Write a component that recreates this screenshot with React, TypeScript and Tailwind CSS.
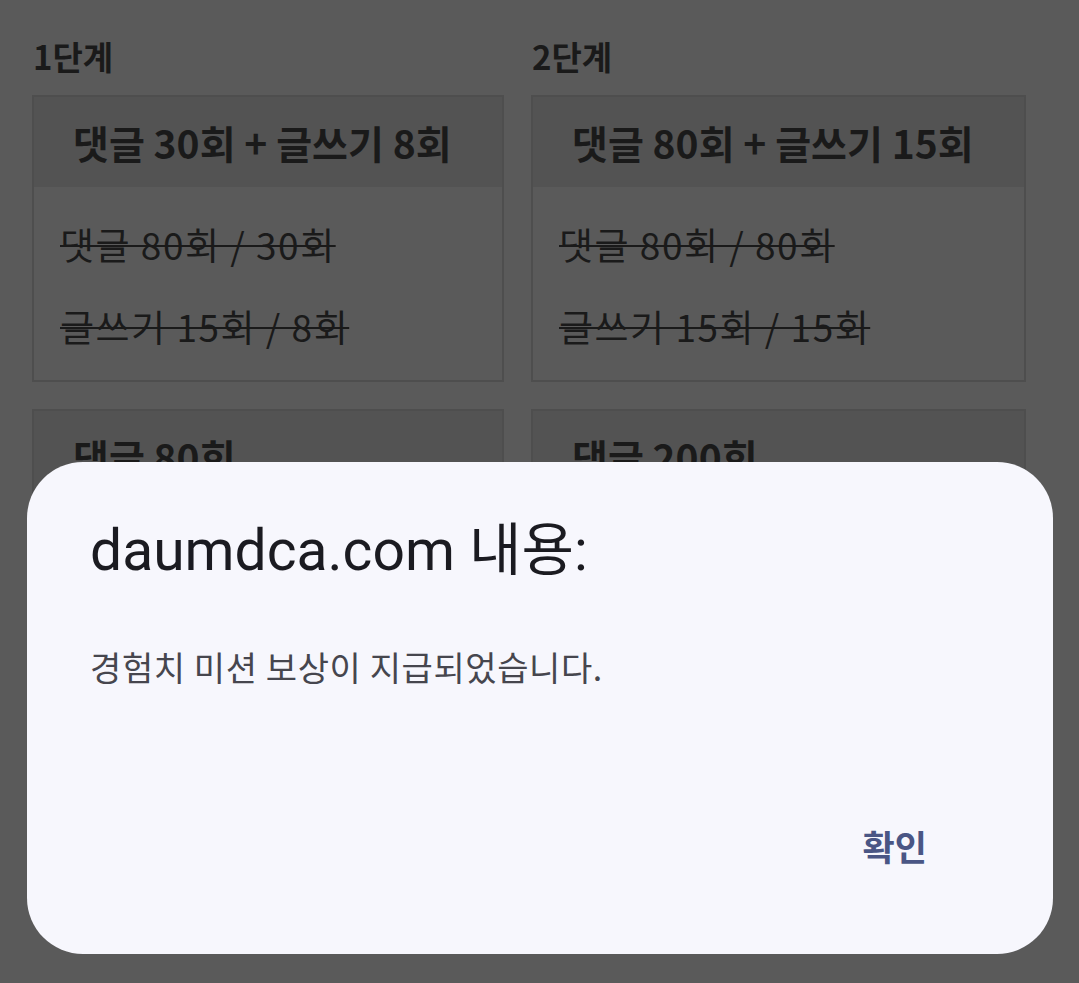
import React from "react";

const KR = "font-['Noto_Sans_CJK_KR','Noto_Sans',sans-serif]";

function Card({ title, lines, last }: { title: string; lines?: string[]; last?: boolean }) {
  return (
    <div className={`border-2 border-[#4e4e4e] ${last ? "" : "mb-[27px]"}`}>
      <div className="h-[90px] bg-[#535353] flex items-center pl-[39px]">
        <span className={`${KR} font-bold text-[39px] leading-none text-[#1a1a1a]`}>{title}</span>
      </div>
      {lines && (
        <div className="pt-[17px] pb-[12px] pl-[26px]">
          {lines.map((l) => (
            <div key={l} className={`${KR} h-[82px] flex items-center text-[37px] text-[#1a1a1a] line-through decoration-2 tracking-[1.5px]`}>
              {l}
            </div>
          ))}
        </div>
      )}
      {!lines && <div className="h-[200px] bg-[#535353]" />}
    </div>
  );
}

export default function App() {
  return (
    <div className="relative w-[1079px] h-[983px] bg-[#5a5a5a] overflow-hidden">
      <div className="flex gap-[27px] pl-[32px] pt-[36px]">
        <div className="w-[472px] flex flex-col">
          <div className={`${KR} font-bold text-[33px] leading-[40px] text-[#1a1a1a] mb-[19px] pl-[1px]`}>1단계</div>
          <Card title="댓글 30회 + 글쓰기 8회" lines={["댓글 80회 / 30회", "글쓰기 15회 / 8회"]} />
          <Card title="댓글 80회" last />
        </div>
        <div className="w-[495px] flex flex-col">
          <div className={`${KR} font-bold text-[33px] leading-[40px] text-[#1a1a1a] mb-[19px] pl-[1px]`}>2단계</div>
          <Card title="댓글 80회 + 글쓰기 15회" lines={["댓글 80회 / 80회", "글쓰기 15회 / 15회"]} />
          <Card title="댓글 200회" last />
        </div>
      </div>

      <div className="absolute left-[27px] top-[462px] w-[1026px] h-[492px] rounded-[56px] bg-[#f7f7fd] flex flex-col pl-[63px] pr-[126px]">
        <div className="mt-[57px] font-['Roboto','Noto_Sans_CJK_KR',sans-serif] text-[57px] leading-[64px] text-[#1b1b21]">
          daumdca.com 내용:
        </div>
        <div className={`${KR} mt-[62px] text-[34px] leading-[44px] text-[#46464e] tracking-[0.6px]`}>
          경험치 미션 보상이 지급되었습니다.
        </div>
        <div className="mt-auto mb-[86px] flex justify-end">
          <span className={`${KR} font-bold text-[35px] leading-[44px] text-[#4a5685]`}>확인</span>
        </div>
      </div>
    </div>
  );
}
